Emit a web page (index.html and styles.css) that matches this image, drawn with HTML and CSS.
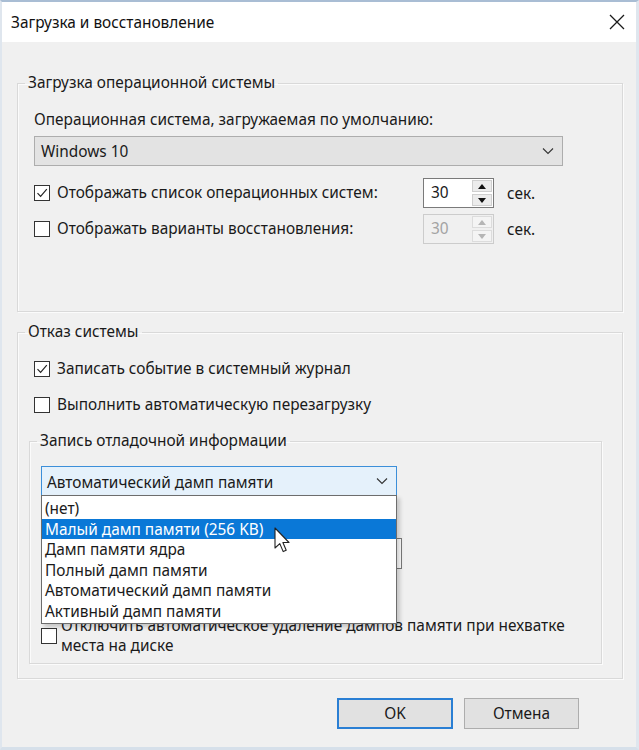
FILE: index.html
```html
<!DOCTYPE html>
<html lang="ru">
<head>
<meta charset="utf-8">
<title>Загрузка и восстановление</title>
<link rel="stylesheet" href="styles.css">
</head>
<body>
<div class="window">
  <div class="titlebar">
    <span class="title">Загрузка и восстановление</span>
    <svg class="close" width="16" height="16" viewBox="0 0 16 16"><path d="M1 1 L15 15 M15 1 L1 15" stroke="#1a1a1a" stroke-width="1.3" fill="none"/></svg>
  </div>
  <div class="content">
    <fieldset class="group g1">
      <legend>Загрузка операционной системы</legend>
      <div class="label">Операционная система, загружаемая по умолчанию:</div>
      <div class="select os-select">
        <span>Windows 10</span>
        <svg class="chev" width="12" height="8" viewBox="0 0 12 8"><path d="M1 1.5 L6 6.5 L11 1.5" stroke="#333" stroke-width="1.1" fill="none"/></svg>
      </div>
      <div class="row spin-row">
        <span class="cb checked"><svg width="14" height="14" viewBox="0 0 14 14"><path d="M2.5 7.2 L5.6 10.3 L11.8 3.2" stroke="#222" stroke-width="1.2" fill="none"/></svg></span>
        <span class="cb-label">Отображать список операционных систем:</span>
        <div class="spinner">
          <span class="spin-val">30</span>
          <span class="spin-btns">
            <span class="spin-b"><svg width="8" height="5" viewBox="0 0 8 5"><path d="M0 5 L4 0 L8 5 Z" fill="#111"/></svg></span>
            <span class="spin-b"><svg width="8" height="5" viewBox="0 0 8 5"><path d="M0 0 L4 5 L8 0 Z" fill="#111"/></svg></span>
          </span>
        </div>
        <span class="sec">сек.</span>
      </div>
      <div class="row spin-row second">
        <span class="cb"></span>
        <span class="cb-label">Отображать варианты восстановления:</span>
        <div class="spinner disabled">
          <span class="spin-val">30</span>
          <span class="spin-btns">
            <span class="spin-b"><svg width="8" height="5" viewBox="0 0 8 5"><path d="M0 5 L4 0 L8 5 Z" fill="#b5b5b5"/></svg></span>
            <span class="spin-b"><svg width="8" height="5" viewBox="0 0 8 5"><path d="M0 0 L4 5 L8 0 Z" fill="#b5b5b5"/></svg></span>
          </span>
        </div>
        <span class="sec">сек.</span>
      </div>
    </fieldset>

    <fieldset class="group g2">
      <legend>Отказ системы</legend>
      <div class="row check-row">
        <span class="cb checked"><svg width="14" height="14" viewBox="0 0 14 14"><path d="M2.5 7.2 L5.6 10.3 L11.8 3.2" stroke="#222" stroke-width="1.2" fill="none"/></svg></span>
        <span class="cb-label">Записать событие в системный журнал</span>
      </div>
      <div class="row check-row second">
        <span class="cb"></span>
        <span class="cb-label">Выполнить автоматическую перезагрузку</span>
      </div>

      <fieldset class="group inner">
        <legend>Запись отладочной информации</legend>
        <div class="dd-wrap">
          <div class="select focused">
            <span>Автоматический дамп памяти</span>
            <svg class="chev" width="12" height="8" viewBox="0 0 12 8"><path d="M1 1.5 L6 6.5 L11 1.5" stroke="#333" stroke-width="1.1" fill="none"/></svg>
          </div>
          <ul class="dd-list">
            <li>(нет)</li>
            <li class="hl">Малый дамп памяти (256 KB)</li>
            <li>Дамп памяти ядра</li>
            <li>Полный дамп памяти</li>
            <li>Автоматический дамп памяти</li>
            <li>Активный дамп памяти</li>
          </ul>
        </div>
        <div class="path-box"></div>
        <div class="row multi-row">
          <span class="cb"></span>
          <span class="cb-label">Отключить автоматическое удаление дампов памяти при нехватке<br>места на диске</span>
        </div>
      </fieldset>
    </fieldset>

    <div class="buttons">
      <button class="btn default">OK</button>
      <button class="btn">Отмена</button>
    </div>
  </div>
  <svg class="cursor" width="17" height="26" viewBox="0 0 17 26"><path d="M1 1 L1 21 L5.8 16.6 L9.2 24.6 L12.2 23.3 L8.9 15.5 L15 15.5 Z" fill="#fff" stroke="#222" stroke-width="1.1" stroke-linejoin="round"/></svg>
</div>
</body>
</html>
```

FILE: styles.css
```css
* { box-sizing: border-box; }
html, body { margin: 0; padding: 0; }
body {
  width: 639px;
  height: 750px;
  overflow: hidden;
  font-family: "Noto Sans", "Open Sans", sans-serif;
  font-size: 15.4px;
  color: #1a1a1a;
  background: #f0f0f0;
}
.window {
  position: relative;
  width: 639px;
  height: 750px;
  background: #f0f0f0;
  border-top: 2px solid #a9bdd4;
  border-left: 2px solid #dfe6ee;
  border-right: 3px solid #dfe6ee;
  border-bottom: 3px solid #d6e0ea;
}
.titlebar {
  height: 40px;
  background: #fff;
  display: flex;
  align-items: center;
  justify-content: space-between;
  padding: 0 11px 0 9px;
}
.title { font-size: 15.4px; color: #111; }
.close { display: block; }
.content {
  padding: 31px 13px 0 15px;
}
.group {
  margin: 0;
  border: 1px solid #d9d9d9;
  box-shadow: inset 1px 1px 0 #fbfbfb, 1px 1px 0 #fbfbfb;
  min-width: 0;
}
.group legend {
  padding: 0 3px;
  line-height: 20px;
  height: 20px;
}
.g1 { padding: 17px 16px 67px 16px; }
.g1 > legend { margin-left: -9px; }
.label { line-height: 20px; height: 20px; }
.select {
  display: flex;
  align-items: center;
  justify-content: space-between;
  height: 30px;
  border: 1px solid #adadad;
  background: #e3e3e3;
  padding: 0 8px 0 6px;
}
.os-select { margin-top: 6px; width: 529px; }
.row { display: flex; align-items: center; }
.spin-row { height: 30px; margin-top: 12px; }
.spin-row.second { margin-top: 6px; }
.cb {
  flex: none;
  width: 16px;
  height: 16px;
  border: 1px solid #333;
  background: #fff;
  display: flex;
  align-items: center;
  justify-content: center;
  margin-right: 7px;
}
.cb svg { display: block; }
.cb-label { line-height: 20px; }
.spin-row .cb-label { width: 366px; white-space: nowrap; }
.spinner {
  display: flex;
  width: 71px;
  height: 30px;
  border: 1px solid #7a7a7a;
  background: #fff;
}
.spin-val { flex: 1; padding-left: 7px; line-height: 28px; }
.spin-btns {
  width: 23px;
  display: flex;
  flex-direction: column;
  gap: 2px;
  padding: 1px 1px 1px 2px;
}
.spin-b {
  flex: 1;
  background: #ececec;
  border: 1px solid #cfcfcf;
  display: flex;
  align-items: center;
  justify-content: center;
}
.spin-b svg { display: block; }
.spinner.disabled { border-color: #cccccc; background: #f0f0f0; }
.spinner.disabled .spin-val { color: #a3a3a3; }
.spinner.disabled .spin-b { background: #f4f4f4; border-color: #dcdcdc; }
.sec { margin-left: 13px; }

.g2 { margin-top: 10px; padding: 17px 20px 14px 11px; }
.g2 > legend { margin-left: -4px; }
.check-row { height: 20px; padding-left: 5px; }
.check-row.second { margin-top: 16px; }

.inner { margin-top: 16px; padding: 15px 10px 7px 11px; }
.inner > legend { margin-left: -4px; }
.dd-wrap { position: relative; width: 356px; }
.select.focused {
  background: #e5f1fb;
  border-color: #3c8fd9;
  padding-left: 5px;
}
.select.focused span { padding-top: 2px; }
.dd-list {
  position: absolute;
  left: 0;
  top: 29px;
  width: 356px;
  margin: 0;
  padding: 2px 0 2px;
  list-style: none;
  background: #fff;
  border: 1px solid #6d6d6d;
  box-shadow: 3px 3px 4px rgba(0,0,0,0.18);
  z-index: 2;
}
.dd-list li {
  height: 20.5px;
  line-height: 21px;
  padding-left: 3px;
  white-space: nowrap;
}
.dd-list li.hl { background: #0a78d7; color: #fff; }
.path-box {
  margin-top: 42px;
  width: 361px;
  height: 31px;
  border: 1px solid #7a7a7a;
  background: #fff;
}
.multi-row { margin-top: 47px; }
.multi-row .cb { margin-right: 4px; }
.multi-row .cb-label { line-height: 20px; white-space: nowrap; }
.buttons {
  display: flex;
  justify-content: flex-end;
  gap: 11px;
  margin-top: 19px;
  padding-right: 44px;
}
.btn {
  font: inherit;
  color: #1a1a1a;
  height: 31px;
  width: 115px;
  background: #e1e1e1;
  border: 1px solid #adadad;
  padding: 0;
}
.btn.default { width: 116px; border: 2px solid #2a7fd4; }
.cursor { position: absolute; left: 272px; top: 525px; z-index: 5; }
```
